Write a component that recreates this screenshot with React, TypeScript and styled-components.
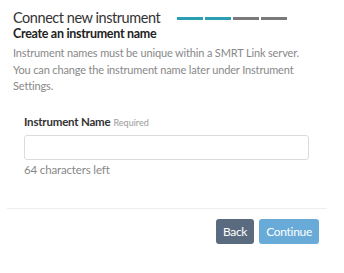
import React from 'react'
import styled, { createGlobalStyle } from 'styled-components'

const GlobalStyle = createGlobalStyle`
  html, body {
    margin: 0;
    padding: 0;
    background: #ffffff;
  }
  body {
    font-family: Lato, "Noto Sans", sans-serif;
    color: #333333;
  }
`;

const Dialog = styled.div`
  width: 344px;
  height: 273px;
  box-sizing: border-box;
  padding: 8px 0 0 0;
`;

const Header = styled.div`
  padding: 0 13px;
`;

const TitleRow = styled.div`
  display: flex;
  align-items: center;
  gap: 17px;
  height: 18px;
`;

const Title = styled.div`
  font-size: 14.5px;
  letter-spacing: -0.45px;
  color: #333;
  white-space: nowrap;
`;

const Steps = styled.div`
  display: flex;
  gap: 2px;
  margin-top: 2px;
`;

const Step = styled.div<{ done: boolean }>`
  width: 26px;
  height: 3px;
  background: ${(p) => (p.done ? '#2a9fb3' : '#7a7a7a')};
`;

const Subtitle = styled.div`
  font-size: 12.5px;
  letter-spacing: -0.3px;
  font-weight: 700;
  color: #222;
`;

const Description = styled.p`
  margin: 4px 0 0 0;
  font-size: 11px;
  letter-spacing: -0.15px;
  line-height: 16.5px;
  color: #888;
  white-space: nowrap;
`;

const Field = styled.div`
  padding: 20px 36px 0 24px;
`;

const Label = styled.div`
  font-size: 11.5px;
  letter-spacing: -0.2px;
  font-weight: 700;
  color: #333;
  display: flex;
  align-items: baseline;
  gap: 3px;
`;

const Hint = styled.span`
  font-size: 9px;
  font-weight: 400;
  letter-spacing: 0;
  color: #999;
`;

const Input = styled.input`
  display: block;
  box-sizing: border-box;
  width: 285px;
  height: 25px;
  margin-top: 7px;
  border: 1px solid #dcdcdc;
  border-radius: 3px;
  outline: none;
`;

const Counter = styled.div`
  font-size: 11.5px;
  letter-spacing: -0.15px;
  color: #888;
  margin-top: 3px;
`;

const Divider = styled.hr`
  margin: 32px 17px 0 7px;
  border: none;
  border-top: 1px solid #eeeeee;
`;

const Footer = styled.div`
  display: flex;
  justify-content: flex-end;
  gap: 5px;
  padding: 10px 25px 0 0;
`;

const Button = styled.button<{ primary?: boolean }>`
  height: 25px;
  padding: 0 7px;
  border: none;
  border-radius: 3px;
  font-family: Lato, "Noto Sans", sans-serif;
  font-size: 12px;
  letter-spacing: -0.3px;
  color: #ffffff;
  background: ${(p) => (p.primary ? '#68abd8' : '#5a6b80')};
`;

export default function App() {
  return (
    <>
      <GlobalStyle />
      <Dialog>
        <Header>
          <TitleRow>
            <Title>Connect new instrument</Title>
            <Steps>
              {[true, true, false, false].map((d, i) => (
                <Step key={i} done={d} />
              ))}
            </Steps>
          </TitleRow>
          <Subtitle>Create an instrument name</Subtitle>
          <Description>
            Instrument names must be unique within a SMRT Link server.
            <br />
            You can change the instrument name later under Instrument
            <br />
            Settings.
          </Description>
        </Header>
        <Field>
          <Label>
            Instrument Name <Hint>Required</Hint>
          </Label>
          <Input />
          <Counter>64 characters left</Counter>
        </Field>
        <Divider />
        <Footer>
          <Button>Back</Button>
          <Button primary>Continue</Button>
        </Footer>
      </Dialog>
    </>
  )
}
